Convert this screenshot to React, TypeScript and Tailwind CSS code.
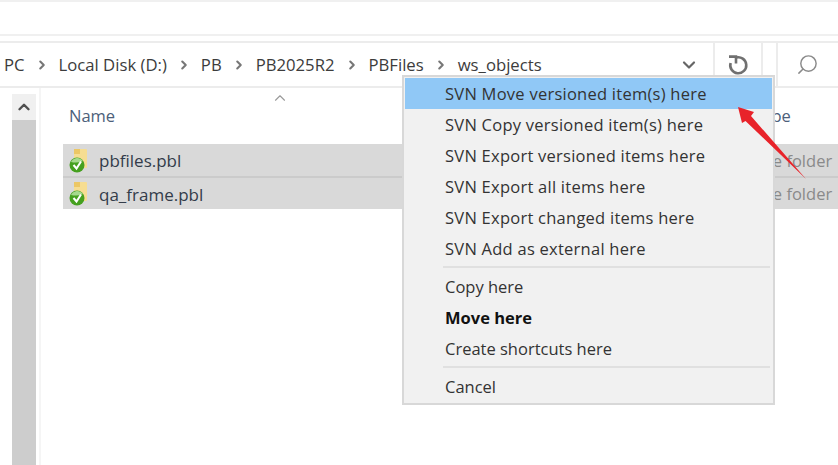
import * as React from "react";
import { ChevronDown, ChevronRight, ChevronUp, Search } from "lucide-react";

const crumbs = ["Local Disk (D:)", "PB", "PB2025R2", "PBFiles", "ws_objects"];

function Crumb({ label }: { label: string }) {
  return (
    <>
      <ChevronRight className="mx-[10px] size-[14px] text-[#777777]" strokeWidth={3.6} />
      <span>{label}</span>
    </>
  );
}

function SvnFileIcon() {
  return (
    <svg width="20" height="26" viewBox="0 0 20 26" className="mt-[1px] shrink-0">
      <rect x="6" y="1" width="13" height="19" rx="1" fill="#f6dd92" />
      <rect x="6" y="1" width="6" height="5" fill="#ecc765" />
      <circle cx="9" cy="17" r="7.5" fill="#45a01f" />
      <path d="M3 14 a7 7 0 0 1 12 -1 a12 7 0 0 1 -12 1z" fill="#a6d98e" />
      <path d="M5.5 17 L8.5 20.5 L13 13.5" fill="none" stroke="#ffffff" strokeWidth="2" />
    </svg>
  );
}

function FileRow({ name }: { name: string }) {
  return (
    <div className="flex h-[34px] items-center border-b-[2px] border-[#cbcbcb] bg-[#d9d9d9] pl-[5px] last:h-[31px] last:border-b-0">
      <SvnFileIcon />
      <span className="ml-[11px] w-[657px] pt-[2px] text-[17px] text-[#333c4a]">{name}</span>
      <span className="whitespace-nowrap pt-[2px] text-[#8a8a8a]">File folder</span>
    </div>
  );
}

function MenuItem({ label, active, bold, svn }: { label: string; active?: boolean; bold?: boolean; svn?: boolean }) {
  return (
    <div
      className={`flex h-[31px] items-center pl-[40px] pt-[2px] ${active ? "bg-[#90c8f6]" : ""} ${
        bold ? "font-bold text-[#111111]" : "text-[#333333]"
      } ${svn ? "tracking-[0.25px]" : ""}`}
    >
      {label}
    </div>
  );
}

function MenuSeparator() {
  return <div className="mb-[3px] ml-[38px] mr-[2px] mt-[2px] h-[2px] bg-[#e0e0e0]" />;
}

export default function App() {
  return (
    <div className="relative h-[465px] w-[838px] overflow-hidden bg-white font-['Open_Sans',sans-serif] text-[16.5px]">
      <div className="h-[2px] bg-[#f0f0f0]" />
      <div className="h-[32px]" />
      <div className="h-[2px] bg-[#f0f0f0]" />
      <div className="h-[5px]" />

      {/* address bar + search */}
      <div className="flex h-[47px] border-y-[2px] border-[#ececec]">
        <div className="flex w-[713px] items-center overflow-hidden whitespace-nowrap pl-[4px] text-[16.7px] text-[#3c3c3c]">
          <span>PC</span>
          {crumbs.map((c) => (
            <Crumb key={c} label={c} />
          ))}
          <ChevronDown className="ml-auto mr-[14px] size-[20px] text-[#666666]" strokeWidth={2.6} />
        </div>
        <div className="flex w-[50px] items-center justify-center border-x-[2px] border-[#ececec]">
          <svg width="24" height="24" viewBox="0 0 24 24" fill="none" stroke="#707070" strokeWidth="2.6">
            <path d="M10 4.6 A8 8 0 1 1 4.6 10" />
            <path d="M3 3.6 H10 V10.5" />
          </svg>
        </div>
        <div className="ml-[13px] flex flex-1 items-center border-l-[2px] border-[#ececec] pl-[18px]">
          <Search className="size-[23px] -scale-x-100 text-[#8a8a8a]" strokeWidth={1.5} />
        </div>
      </div>

      <div className="flex h-[377px]">
        {/* scrollbar */}
        <div className="ml-[12px] mt-[6px] flex w-[24px] flex-col bg-[#cdcdcd]">
          <div className="flex h-[26px] items-center justify-center bg-[#f0f0f0]">
            <ChevronUp className="size-[18px] text-[#505050]" strokeWidth={3.2} />
          </div>
        </div>
        <div className="ml-[3px] w-[2px] bg-[#f5f5f5]" />

        {/* file list */}
        <div className="ml-[22px] flex-1">
          <div className="relative flex h-[56px] items-center pl-[6px] pt-[1px] text-[#4c607a]">
            <span>Name</span>
            <ChevronUp className="absolute left-[208px] top-[1px] size-[18px] text-[#9a9a9a]" strokeWidth={1.5} />
            <span className="ml-[639px] whitespace-nowrap">Type</span>
          </div>
          <FileRow name="pbfiles.pbl" />
          <FileRow name="qa_frame.pbl" />
        </div>
      </div>

      {/* context menu */}
      <div className="absolute left-[402px] top-[75px] w-[373px] border-[2px] border-[#d8d8d8] bg-[#f1f1f1] px-[1px] pb-[1px] pt-[1px]">
        <MenuItem label="SVN Move versioned item(s) here" active svn />
        <MenuItem label="SVN Copy versioned item(s) here" svn />
        <MenuItem label="SVN Export versioned items here" svn />
        <MenuItem label="SVN Export all items here" svn />
        <MenuItem label="SVN Export changed items here" svn />
        <MenuItem label="SVN Add as external here" svn />
        <MenuSeparator />
        <MenuItem label="Copy here" />
        <MenuItem label="Move here" bold />
        <MenuItem label="Create shortcuts here" />
        <MenuSeparator />
        <MenuItem label="Cancel" />
      </div>

      {/* red annotation arrow */}
      <svg className="absolute left-[730px] top-[100px]" width="84" height="84" viewBox="0 0 84 84">
        <path d="M8 7 L24 12 L21 16 L76 79 L15.5 21 L12 23 Z" fill="#e8232a" />
      </svg>
    </div>
  );
}
